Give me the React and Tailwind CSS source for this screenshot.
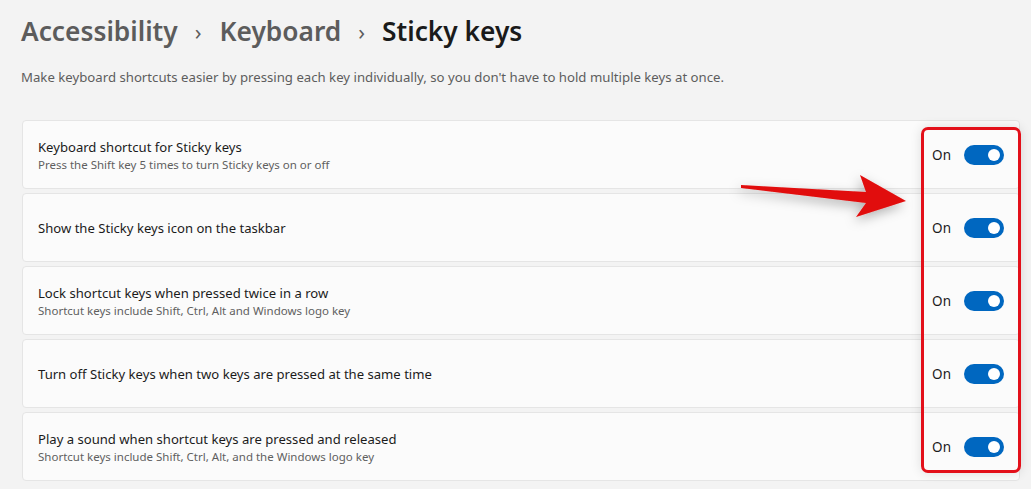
import React from "react";

const rows = [
  { title: "Keyboard shortcut for Sticky keys", sub: "Press the Shift key 5 times to turn Sticky keys on or off" },
  { title: "Show the Sticky keys icon on the taskbar" },
  { title: "Lock shortcut keys when pressed twice in a row", sub: "Shortcut keys include Shift, Ctrl, Alt and Windows logo key" },
  { title: "Turn off Sticky keys when two keys are pressed at the same time" },
  { title: "Play a sound when shortcut keys are pressed and released", sub: "Shortcut keys include Shift, Ctrl, Alt, and the Windows logo key" },
];

function Toggle() {
  return (
    <div className="w-[40px] h-[20px] rounded-full bg-[#0067c0] flex items-center justify-end pr-[4px]">
      <div className="w-[12px] h-[12px] rounded-full bg-white" />
    </div>
  );
}

export default function App() {
  return (
    <div
      className="relative w-[1031px] h-[489px] overflow-hidden bg-[#f3f3f3]"
      style={{ fontFamily: '"Noto Sans", "Open Sans", sans-serif' }}
    >
      <div className="pl-[21px] pt-[13px] flex items-center text-[26.3px] font-semibold leading-[36px]">
        <span className="text-[#5c5c5c]">Accessibility</span>
        <span className="text-[#5c5c5c] text-[22px] font-normal ml-[17px] mr-[18px]">›</span>
        <span className="text-[#5c5c5c]">Keyboard</span>
        <span className="text-[#5c5c5c] text-[22px] font-normal ml-[17px] mr-[17px]">›</span>
        <span className="text-[#1a1a1a]">Sticky keys</span>
      </div>
      <div className="pl-[21px] mt-[18px] text-[13.2px] leading-[20px] text-[#5d5d5d]">
        Make keyboard shortcuts easier by pressing each key individually, so you don't have to hold multiple keys at once.
      </div>
      <div className="ml-[22px] w-[998px] mt-[33px] flex flex-col gap-[4px]">
        {rows.map((r, i) => (
          <div
            key={i}
            className="h-[69px] rounded-[4px] border border-[#e5e5e5] bg-[#fbfbfb] flex items-center pl-[15px] pr-[15px]"
          >
            <div className="flex-1 flex flex-col">
              <div className="text-[13.1px] leading-[20px] text-[#1b1b1b]">{r.title}</div>
              {r.sub && <div className="text-[11.5px] leading-[16px] text-[#5f5f5f]">{r.sub}</div>}
            </div>
            <div className="flex items-center gap-[13px]">
              <span className="text-[13.5px] leading-[20px] text-[#1b1b1b]">On</span>
              <Toggle />
            </div>
          </div>
        ))}
      </div>

      <div className="absolute left-[921px] top-[127px] w-[100px] h-[346px] border-[3px] border-[#e3101a] rounded-[7px] shadow-[0_0_12px_rgba(0,0,0,0.12)]" />

      <svg className="absolute left-0 top-0" width="1031" height="489" viewBox="0 0 1031 489">
        <defs>
          <filter id="sh" x="-20%" y="-50%" width="140%" height="200%">
            <feDropShadow dx="-2" dy="4" stdDeviation="6" floodColor="#000" floodOpacity="0.3" />
          </filter>
        </defs>
        <polygon
          points="741,185 866,192 860,175 906,201 856,217 866,203 741,188"
          fill="#e10a0a"
          filter="url(#sh)"
        />
      </svg>
    </div>
  );
}
